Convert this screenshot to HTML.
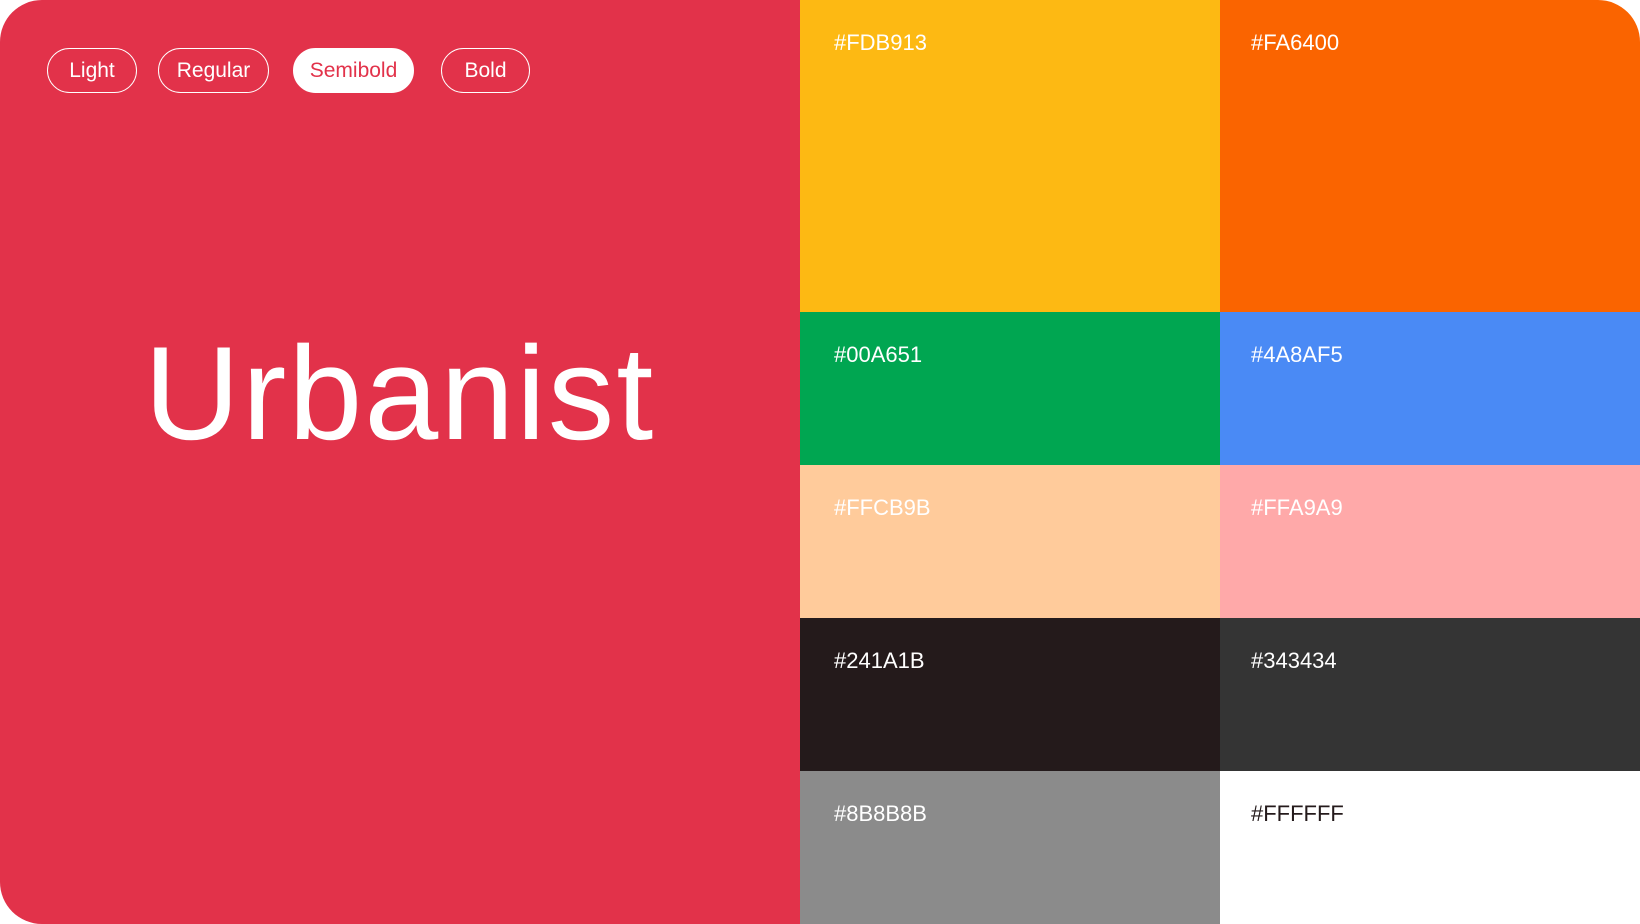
<!DOCTYPE html>
<html><head><meta charset="utf-8"><style>
html,body{margin:0;padding:0;background:#fff;}
body{width:1640px;height:924px;position:relative;overflow:hidden;font-family:"Liberation Sans",sans-serif;}
.wrap{position:absolute;left:0;top:0;width:1640px;height:924px;border-radius:42px 42px 0 42px;overflow:hidden;}
.red{position:absolute;left:0;top:0;width:800px;height:924px;background:#E2324A;}
.pill{position:absolute;top:48px;height:45px;border:1.5px solid #fff;border-radius:23px;color:#fff;font-size:21px;line-height:44px;text-align:center;box-sizing:border-box;}
.title{position:absolute;left:144px;top:328px;font-size:133px;color:#fff;line-height:1;letter-spacing:2px;}
.sw{position:absolute;box-sizing:border-box;padding:32px 0 0 34px;font-size:22px;color:#fff;line-height:1;}
</style></head><body>
<div class="wrap">
<div class="red">
<div class="pill" style="left:47px;width:90px;font-weight:300;">Light</div>
<div class="pill" style="left:158px;width:111px;">Regular</div>
<div class="pill" style="left:293px;width:121px;background:#fff;color:#E2324A;">Semibold</div>
<div class="pill" style="left:441px;width:89px;">Bold</div>
<div class="title">Urbanist</div>
</div>
<div class="sw" style="left:800px;top:0;width:420px;height:312px;background:#FDB913;">#FDB913</div>
<div class="sw" style="left:1220px;top:0;width:420px;height:312px;background:#FA6400;padding-left:31px;">#FA6400</div>
<div class="sw" style="left:800px;top:312px;width:420px;height:153px;background:#00A651;">#00A651</div>
<div class="sw" style="left:1220px;top:312px;width:420px;height:153px;background:#4A8AF5;padding-left:31px;">#4A8AF5</div>
<div class="sw" style="left:800px;top:465px;width:420px;height:153px;background:#FFCB9B;">#FFCB9B</div>
<div class="sw" style="left:1220px;top:465px;width:420px;height:153px;background:#FFA9A9;padding-left:31px;">#FFA9A9</div>
<div class="sw" style="left:800px;top:618px;width:420px;height:153px;background:#241A1B;">#241A1B</div>
<div class="sw" style="left:1220px;top:618px;width:420px;height:153px;background:#343434;padding-left:31px;">#343434</div>
<div class="sw" style="left:800px;top:771px;width:420px;height:153px;background:#8B8B8B;">#8B8B8B</div>
<div class="sw" style="left:1220px;top:771px;width:420px;height:153px;background:#FFFFFF;color:#241A1B;padding-left:31px;">#FFFFFF</div>
</div>
</body></html>
